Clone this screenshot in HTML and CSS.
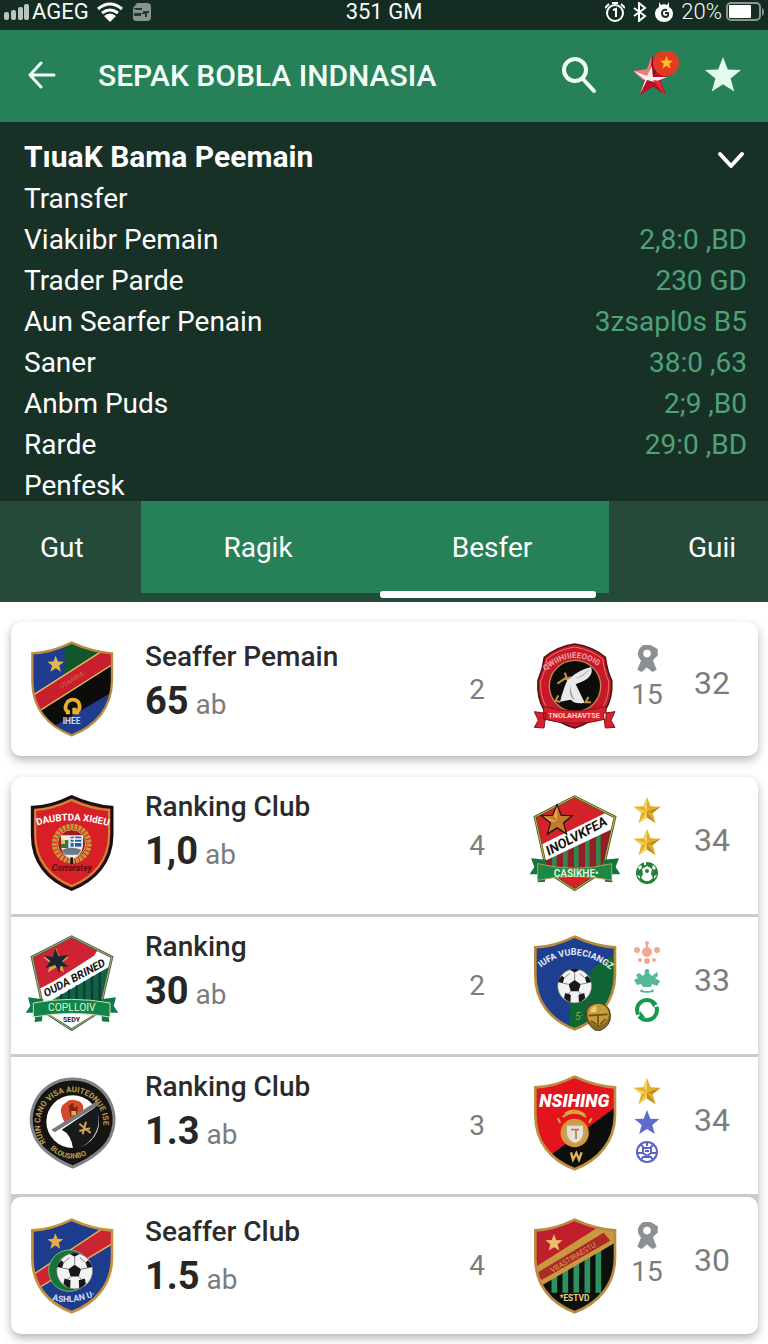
FILE: index.html
```html
<!DOCTYPE html>
<html lang="id">
<head>
    <meta charset="UTF-8">
    <meta name="viewport" content="width=device-width, initial-scale=1.0">
    <title>Sepak Bobla Indnasia</title>
    <link rel="stylesheet" href="styles.css">
</head>
<body>
    <!-- shared shapes -->
    <svg class="defs" width="0" height="0" aria-hidden="true">
        <defs>
            <path id="shape" d="M143 5Q80 36 25 37V120C25 200 70 255 143 283C215 255 263 200 264 120V37Q205 33 143 5Z"/>
            <clipPath id="inside"><use href="#shape"/></clipPath>
            <path id="penta" d="M143 5L24 66L60 230L143 284L226 230L264 66Z"/>
            <clipPath id="insidePenta"><use href="#penta"/></clipPath>
            <symbol id="star" viewBox="0 0 24 24"><path d="M12 0l3.2 8.3 8.8.4-6.900 5.600 2.400 8.700L12 18.200 4.500 23l2.400-8.700L0 8.700l8.800-.4z"/></symbol>
            <symbol id="gold" viewBox="0 0 24 24">
                <path fill="#e3ae2b" d="M12 0l3.200 8.300 8.800.4-6.900 5.600 2.400 8.700L12 18.200 4.500 23l2.400-8.700L0 8.700l8.800-.4z"/>
                <path fill="#f7d257" d="M12 0v13L8.800 8.300zM0 8.700l12 4.300-5.100 1.300zM4.500 23L12 13v5.200z"/>
                <path fill="#c28a18" d="M24 8.700L12 13l5.100 1.300zM19.500 23L12 13v5.200z"/>
            </symbol>
            <symbol id="ball" viewBox="0 0 100 100">
                <circle cx="50" cy="50" r="48" fill="#f3f3f3" stroke="#777" stroke-width="2"/>
                <path fill="#181818" d="M50 33l17 12-6 20H39l-6-20zM36 4l14 8 14-8q-14-5-28 0zM3 39l13 3 5-15-7-6Q4 29 3 39zM97 39l-13 3-5-15 7-6q9 8 11 18zM20 85l3-15 16 5-1 21q-10-3-18-11zM80 85l-3-15-16 5 1 21q10-3 18-11z"/>
                <path fill="none" stroke="#555" stroke-width="2" d="M50 33V12M33 45L16 42M67 45l17-3M39 65l-8 8M61 65l8 8M21 27L36 14M79 27L64 14"/>
            </symbol>
            <symbol id="award" viewBox="0 0 20 26">
                <circle cx="10" cy="8" r="6" fill="none" stroke="#8d9092" stroke-width="5"/>
                <path fill="#8d9092" d="M5 13h10l4 10-4 2-5-4-5 4-4-2zM15 1l5 3v6l-4 3z"/>
            </symbol>
        </defs>
    </svg>

    <div class="status">
        <div class="status-left">
            <svg width="26" height="18" viewBox="0 0 26 18" fill="#b9c4be"><rect y="9" width="5" height="8" rx="2"/><rect x="7" y="7" width="5" height="10" rx="2"/><rect x="14" y="4" width="5" height="13" rx="2"/><rect x="20" y="1" width="5" height="16" rx="2"/></svg>
            <span>AGEG</span>
            <svg class="wifi" width="26" height="20" viewBox="0 0 26 20" fill="none" stroke="#fff" stroke-width="3"><path d="M1 7Q13-3 25 7M5 11q8-6 16 0"/><path fill="#fff" stroke="none" d="M7 14q6-5 12 0l-6 6z"/></svg>
            <svg width="18" height="18" viewBox="0 0 18 18"><path fill="#87938d" d="M4 0h10q4 0 4 4v10q0 4-4 4H3q-3 0-3-3v-3V5z"/><path fill="#26382f" d="M0 5h9v2H3zM1 10h9V8h6v2h-2v4h-2v-3H8v2H1z"/></svg>
        </div>
        <span>351 GM</span>
        <div class="status-right">
            <svg width="20" height="20" viewBox="0 0 20 20" fill="none" stroke="#fff" stroke-width="2"><circle cx="10" cy="11" r="8"/><path d="M0 6l4-4M20 6l-4-4M8 8l3-1v8M7 1h6"/></svg>
            <svg width="14" height="20" viewBox="0 0 14 20" fill="none" stroke="#fff" stroke-width="2"><path d="M1 6l11 8-6 5V1l6 5-11 8"/></svg>
            <svg width="18" height="20" viewBox="0 0 18 20"><path fill="#fff" d="M4 0l2 3 3-1 3 1 2-3v5q4 2 4 7a9 8 0 0 1-18 0q0-5 4-7z"/><path fill="none" stroke="#142c22" stroke-width="2" d="M12 8q-5-1-5 3t4 4q3-1 2-4h-3"/></svg>
            <span class="battery-text">20%</span>
            <svg width="38" height="20" viewBox="0 0 38 20"><rect x="1" y="1" width="33" height="17" rx="4" fill="none" stroke="#8d9892" stroke-width="2"/><rect x="3" y="3" width="22" height="13" rx="1" fill="#fff"/><path fill="#8d9892" d="M36 6q2 1 2 4t-2 4z"/></svg>
        </div>
    </div>

    <header>
        <button class="back" aria-label="Kembali"><svg width="28" height="28" viewBox="0 0 28 28" fill="none" stroke="#f4fff9" stroke-width="3" stroke-linecap="round" stroke-linejoin="round"><path d="M26 14H2M13 2L2 14l11 12"/></svg></button>
        <h1>SEPAK BOBLA INDNASIA</h1>
        <div class="actions">
            <button aria-label="Cari"><svg width="36" height="38" viewBox="0 0 36 38" fill="none" stroke="#f0fff8" stroke-width="4" stroke-linecap="round"><circle cx="14" cy="14" r="11"/><path d="M22 23l11 12"/></svg></button>
            <button class="wide" aria-label="Klub">
                <svg width="60" height="48" viewBox="0 0 60 48">
                    <path fill="#b8122a" d="M31 4l5 14 14 3-10 9 5 14-13-8-13 8 4-15-11-9 14-2z"/>
                    <path fill="#ee7b7c" d="M31 4l-2 20-7 5-10-9 14-2z"/>
                    <path fill="#fbeeee" d="M13 20l13 5 5-10 1 11 14 0-12 5-8-2-7 14 5-14z"/>
                    <path fill="#e0283a" d="M32 29l7 1 5 14z"/>
                    <path fill="#820c1c" d="M31 4l5 14-4 8z"/>
                    <circle cx="45" cy="12" r="13" fill="#e33a26"/>
                    <use href="#star" x="39" y="5" width="13" height="13" fill="#ffc21c"/>
                </svg>
            </button>
            <button aria-label="Favorit"><svg width="36" height="36" viewBox="0 0 24 24" fill="#e2fbee"><use href="#star" width="24" height="24"/></svg></button>
        </div>
    </header>

    <section class="panel">
        <div class="panel-head">
            <h2>TıuaK Bama Peemain</h2>
            <button aria-label="Tutup"><svg width="28" height="18" viewBox="0 0 28 18" fill="none" stroke="#fff" stroke-width="4" stroke-linecap="round" stroke-linejoin="round"><path d="M3 3l11 12L25 3"/></svg></button>
        </div>
        <dl>
            <div><dt>Transfer</dt></div>
            <div><dt>Viakıibr Pemain</dt><dd>2,8:0 ,BD</dd></div>
            <div><dt>Trader Parde</dt><dd>230 GD</dd></div>
            <div><dt>Aun Searfer Penain</dt><dd>3zsapl0s B5</dd></div>
            <div><dt>Saner</dt><dd>38:0 ,63</dd></div>
            <div><dt>Anbm Puds</dt><dd>2;9 ,B0</dd></div>
            <div><dt>Rarde</dt><dd>29:0 ,BD</dd></div>
            <div><dt>Penfesk</dt></div>
        </dl>
    </section>

    <nav>
        <button class="tab first">Gut</button>
        <button class="tab green">Ragik</button>
        <button class="tab green active">Besfer</button>
        <button class="tab last">Guii</button>
    </nav>

    <main>
        <div class="card">
            <article class="row tall">
                <svg class="crest" viewBox="0 0 288 288">
                    <g clip-path="url(#inside)">
                        <path fill="#1f3c8f" d="M0 0h288v288H0z"/>
                        <path fill="#11572b" d="M122 0h100v60l-100 60z"/>
                        <path fill="#0c0d0a" d="M30 210L288 60v80L80 262z"/>
                        <path fill="#c71f2c" stroke="#e6bd62" stroke-width="4" d="M0 180L250 20l40 35L30 220z"/>
                    </g>
                    <use href="#star" x="70" y="44" width="50" height="50" fill="#dcb94f"/>
                    <text transform="rotate(-31 140 122)" x="104" y="126" font-size="20" fill="#d9643e">USAABIA</text>
                    <path fill="none" stroke="#eaae31" stroke-width="11" d="M131 212q-10-8-5-20 5-16 21-16t19 16q4 12-6 20v8"/>
                    <path fill="#eaae31" d="M124 208h14v12h-12zM145 200h13v20h-13z"/>
                    <text x="116" y="248" font-size="25" font-weight="700" fill="#c9d6f4">IHEE</text>
                    <use href="#shape" fill="none" stroke="#bb8b3f" stroke-width="7"/>
                </svg>
                <div class="info"><h3>Seaffer Pemain</h3><p><b>65</b> ab</p></div>
                <span class="count">2</span>
                <svg class="crest" viewBox="0 0 288 288">
                    <path fill="#c9182b" stroke="#531217" stroke-width="5" d="M143 9q55 8 92 40 5 40 19 70 4 50-20 90-40 35-91 52-55-17-91-52-23-40-19-90 15-35 19-70 40-33 91-40z"/>
                    <path fill="none" stroke="#e37a54" stroke-width="3" d="M143 18q50 8 84 36 5 40 18 66 3 45-19 82M143 18q-50 8-84 36-5 40-18 66-3 45 19 82"/>
                    <circle cx="144" cy="135" r="77" fill="#0d0c0b" stroke="#c68d46" stroke-width="4"/>
                    <path fill="#e8e8ea" d="M192 78q10 25-24 43l-22 9q14 28 27 55-28 6-42-9l-32 6q10-38 22-65l-14-3 25-5q24-22 60-31z"/>
                    <path fill="#9b9ca0" d="M192 78q-16 22-48 35 30-5 48-35M130 130q0 30 15 50-22-12-15-50"/>
                    <path fill="none" stroke="#c2943a" stroke-width="6" d="M91 128l28-19-6-14M116 116l16-8M94 163l-8 16 14 4M184 168l-8 16h16"/>
                    <path id="arc1" fill="none" d="M56 90q88-78 176 0"/>
                    <text font-size="24" font-weight="700" fill="#f1a8a3"><textPath href="#arc1">QWIIHIIIEEOOIG</textPath></text>
                    <path fill="#d6202c" stroke="#7d141b" stroke-width="3" d="M22 212l35 5-6 44-29-2 12-21zM264 212l-35 5 6 44 29-2-12-21zM50 196q93 28 187 0v38q-94 26-187 0z"/>
                    <text x="64" y="231" font-size="22" font-weight="700" fill="#ffd0c8">TNOLAHAVTSE</text>
                </svg>
                <div class="badges"><svg width="22" height="28"><use href="#award"/></svg><span>15</span></div>
                <span class="total">32</span>
            </article>
        </div>

        <div class="card">
            <article class="row">
                <svg class="crest" viewBox="0 0 288 288">
                    <use href="#shape" fill="#d91f26" stroke="#17120f" stroke-width="9"/>
                    <path fill="none" stroke="#c88b39" stroke-width="6" d="M143 15Q85 42 34 45V120C34 194 77 246 143 273C210 246 254 194 255 120V45Q200 42 143 15Z"/>
                    <path id="arc2" fill="none" d="M40 92q104-34 230 6"/>
                    <text font-size="29" font-weight="700" fill="#fff"><textPath href="#arc2">DAUBTDA XIdEU</textPath></text>
                    <circle cx="143" cy="146" r="52" fill="none" stroke="#c19a3c" stroke-width="15" stroke-dasharray="9 3"/>
                    <circle cx="143" cy="146" r="42" fill="#a2191d" stroke="#d8b24e" stroke-width="3"/>
                    <path fill="#e9edf0" d="M111 121h66v32q-4 30-34 41-29-12-32-41z"/>
                    <path fill="#1d5ea8" d="M140 125h32v30h-32z"/><path stroke="#fff" stroke-width="4" d="M140 132h32M140 142h32M151 125v30"/>
                    <path fill="#37734d" d="M111 135h22v24h-22z"/><path fill="#f0bd34" d="M111 135h12v12h-12z"/><path fill="#6a7a80" d="M114 165q26-14 58 0l-10 14h-38z"/>
                    <path stroke="#26120a" stroke-width="8" d="M143 187v20"/>
                    <text x="83" y="229" font-size="26" font-weight="700" font-style="italic" fill="#541210">Corroratey</text>
                </svg>
                <div class="info"><h3>Ranking Club</h3><p><b>1,0</b> ab</p></div>
                <span class="count">4</span>
                <svg class="crest" viewBox="0 0 288 288">
                    <g clip-path="url(#insidePenta)">
                        <path fill="#d32229" d="M0 0h288v288H0z"/>
                        <path fill="#951c2a" d="M40 180L264 80v150H40z"/>
                        <path stroke="#2f8a47" stroke-width="14" d="M82 130v100M115 130v100M148 120v110M181 110v120M214 90v140"/>
                        <path fill="#fff" d="M20 160L264 40v58L45 202z"/>
                    </g>
                    <text transform="rotate(-28 150 124)" x="48" y="136" font-size="40" font-weight="700" font-style="italic" fill="#15120f">INOLVKFEA</text>
                    <use href="#penta" fill="none" stroke="#4c5a20" stroke-width="8"/><use href="#penta" fill="none" stroke="#d8b55c" stroke-width="3"/>
                    <use href="#star" x="34" y="24" width="112" height="102" fill="#1e130a"/>
                    <use href="#star" x="46" y="34" width="88" height="82" fill="#c37b2a"/>
                    <path fill="#e2a04a" d="M91 34v44L79 62zM48 63l43 15-18 4z"/>
                    <path fill="#15733c" d="M12 190l46 4-4 66-22 2 2-24H8l14-22zM276 190l-46 4 4 66 22 2-2-24h26l-14-22z"/>
                    <path fill="#1c8846" stroke="#b3a052" stroke-width="3" d="M32 206q112 28 222 0v50q-112-24-222 0z"/>
                    <text x="80" y="245" font-size="30" font-weight="700" fill="#dff5d8">CASIKHE•</text>
                </svg>
                <div class="badges"><svg width="28" height="27"><use href="#gold"/></svg><svg width="28" height="27"><use href="#gold"/></svg>
                    <svg width="24" height="24" viewBox="0 0 24 24"><circle cx="12" cy="12" r="11" fill="#248238"/><path fill="#fff" d="M12 5l5 3-1 5 2 4-4 3h-4l-4-3 2-4-1-5zM3 6l3-2 1 3-3 2zM18 4l3 3-2 2-2-2zM2 14l3 1v3zM22 14l-3 1v3zM9 1h2v3H9z"/><circle cx="12" cy="10" r="2" fill="#248238"/></svg>
                </div>
                <span class="total">34</span>
            </article>

            <article class="row">
                <svg class="crest" viewBox="0 0 288 288">
                    <g clip-path="url(#insidePenta)">
                        <path fill="#fff" d="M0 0h288v288H0z"/>
                        <path fill="#cf2334" d="M0 0h250L210 62 50 165 20 60z"/>
                        <path fill="#0d6546" d="M50 215l214-125v140H50z"/>
                        <path stroke="#15383a" stroke-width="7" d="M112 176v60M135 160v76M158 150v86M181 138v98M204 124v110M227 110v100"/>
                        <path fill="#fff" d="M45 162L264 48v42L50 212z"/>
                    </g>
                    <text transform="rotate(-28 150 124)" x="46" y="140" font-size="33" font-weight="700" font-style="italic" fill="#141414">OUDA BRINED</text>
                    <use href="#penta" fill="none" stroke="#476346" stroke-width="8"/><use href="#penta" fill="none" stroke="#d7d7a0" stroke-width="2"/>
                    <use href="#star" x="56" y="38" width="80" height="78" fill="#dda14c"/>
                    <path fill="#1b2733" d="M94 40l10 24 30-4-20 19 20 18-25-4-3 21-12-24-30 10 15-22-19-16 26 3z"/>
                    <path fill="#0e7a48" d="M12 187l46 6-4 66-22 2 2-28H5l14-20zM276 187l-46 6 4 66 22 2-2-28h29l-14-20z"/>
                    <path fill="#fff" d="M76 238q67-10 134 0l-67 40z"/>
                    <path fill="#108549" stroke="#d3dcb0" stroke-width="3" d="M28 204q115-22 230 0v42q-115-22-230 0z"/>
                    <text x="72" y="229" font-size="31" fill="#dff5d8">COPLLOIV</text>
                    <text x="117" y="261" font-size="21" font-weight="700" fill="#222">SEDY</text>
                </svg>
                <div class="info"><h3>Ranking</h3><p><b>30</b> ab</p></div>
                <span class="count">2</span>
                <svg class="crest" viewBox="0 0 288 288">
                    <g clip-path="url(#inside)">
                        <path fill="#1c3f90" d="M0 0h288v288H0z"/>
                        <path fill="#0f6534" d="M288 50q-90 30-108 80-10 40-52 70v88h160z"/>
                    </g>
                    <use href="#shape" fill="none" stroke="#b98a3a" stroke-width="8"/>
                    <path id="arc3" fill="none" d="M42 98q102-80 214 10"/>
                    <text font-size="27" font-weight="700" fill="#e6ecf8"><textPath href="#arc3">IUFA VUBECIANGZ</textPath></text>
                    <use href="#ball" x="90" y="100" width="106" height="106"/>
                    <text x="143" y="254" font-size="32" font-style="italic" fill="#7fae3d">5·</text>
                    <path fill="#8a6a22" stroke="#4f3a10" stroke-width="3" d="M178 240q-6-32 32-34 40 0 40 34 4 34-38 50-32-16-34-50z"/>
                    <circle cx="213" cy="238" r="32" fill="#c79d3c"/>
                    <path fill="#ead078" d="M190 232q2-18 18-20v20z"/><path fill="none" stroke="#6d5118" stroke-width="5" d="M184 242l58-4M213 242v34M192 258l16 10M236 252l-16 16"/>
                </svg>
                <div class="badges">
                    <svg width="26" height="24" viewBox="0 0 26 24" fill="#f3a890"><circle cx="13" cy="12" r="5"/><circle cx="13" cy="3" r="2"/><circle cx="3" cy="10" r="3"/><circle cx="23" cy="10" r="3"/><circle cx="6" cy="20" r="2"/><circle cx="13" cy="21" r="3"/><circle cx="20" cy="20" r="2"/><path d="M12 3h2v8h-2z"/></svg>
                    <svg width="26" height="24" viewBox="0 0 26 24" fill="#56b898"><path d="M11 4q-1-4 2-4t2 4l3 3 5-4 1 4-3 2 5 3-3 5-5-2-1 3H9l-2-3-4 1-3-5 4-2-2-3 3-2 4 3zM7 20l3 2h6l3-2 1 3-7 1-7-1z"/></svg>
                    <svg width="24" height="24" viewBox="0 0 24 24" fill="none" stroke="#159a4d" stroke-width="4"><circle cx="12" cy="12" r="10"/><path stroke="#fff" stroke-width="2" d="M24 7l-7 2M0 19l7-3"/><path fill="#159a4d" stroke="none" d="M15 4l5 1-1 5zM4 20l1-7 5 6z"/></svg>
                </div>
                <span class="total">33</span>
            </article>

            <article class="row">
                <svg class="crest" viewBox="0 0 288 288">
                    <path fill="#151412" stroke="#818487" stroke-width="9" d="M146 12a122 122 0 0 1 80 216q-35 30-80 48-45-18-80-48A122 122 0 0 1 146 12z"/>
                    <path id="arc4" fill="none" d="M66 202A95 95 0 1 1 220 202"/>
                    <text font-size="24" font-weight="700" fill="#b59f4e"><textPath href="#arc4">RUIN CANO VISA AUITEDNUE ISE</textPath></text>
                    <path id="arc5" fill="none" d="M78 222q68 60 140-4"/>
                    <text font-size="22" font-weight="700" fill="#b59f4e"><textPath href="#arc5">BLOUSINBO</textPath></text>
                    <circle cx="146" cy="140" r="79" fill="#fff"/>
                    <path fill="#17191a" d="M113 164L215 96q22 48-10 94-28 32-58 30-6-43-34-56z"/>
                    <path fill="#d5482b" d="M120 138q-20-42 4-54 14-14 30-8 26 4 24 28l-8 16-44 26z"/><path fill="#7e2415" d="M134 92l12-8 4 14 12-4-4 22-10-4-8 14z"/><path fill="#f4a53d" d="M142 108h14v12h-14z"/>
                    <path fill="#777a7b" d="M82 164L220 78l4 12-132 82z"/>
                    <path stroke="#d8a448" stroke-width="6" d="M166 146l34 28M186 140l-10 38M166 168l32-8"/>
                </svg>
                <div class="info"><h3>Ranking Club</h3><p><b>1.3</b> ab</p></div>
                <span class="count">3</span>
                <svg class="crest" viewBox="0 0 288 288">
                    <g clip-path="url(#inside)">
                        <path fill="#0e0d0d" d="M0 0h288v288H0z"/>
                        <path fill="#e3141b" d="M0 0h288v80L60 248 0 260z"/>
                    </g>
                    <use href="#shape" fill="none" stroke="#bd8f42" stroke-width="8"/>
                    <text x="37" y="97" font-size="54" font-weight="900" font-style="italic" fill="#fff">NSIHING</text>
                    <path fill="none" stroke="#dca541" stroke-width="6" d="M107 126q35-26 70 0M114 116q28-20 60 4M100 144l-8-14M186 144l8-14"/>
                    <circle cx="143" cy="174" r="38" fill="#c4a06a" stroke="#d89a2e" stroke-width="9"/>
                    <path fill="#e9e0d2" d="M120 152h48v26q-4 20-24 26-20-6-24-26z"/><path fill="none" stroke="#a1845a" stroke-width="5" d="M132 164h24M147 164v28"/>
                    <path fill="none" stroke="#e4b65a" stroke-width="7" d="M132 232l6 22 10-20 8 20 8-22"/>
                </svg>
                <div class="badges"><svg width="28" height="27"><use href="#gold"/></svg><svg width="26" height="25" fill="#5b6ccd"><use href="#star"/></svg>
                    <svg width="24" height="24" viewBox="0 0 24 24" fill="none" stroke="#5865c4" stroke-width="2"><circle cx="12" cy="12" r="10"/><path d="M5 4l4 4h6l4-4M8 8v5l4 3 4-3V8M2 13h6M16 13h6M6 20l2-3h8l2 3M10 11h4M12 2v4"/></svg>
                </div>
                <span class="total">34</span>
            </article>

            <article class="row tall">
                <svg class="crest" viewBox="0 0 288 288">
                    <g clip-path="url(#inside)">
                        <path fill="#1d3d8c" d="M0 0h288v288H0z"/>
                        <path fill="#cb2433" stroke="#e4b566" stroke-width="4" d="M0 188L250 22l40 40L30 218z"/>
                    </g>
                    <use href="#shape" fill="none" stroke="#c6923d" stroke-width="8"/>
                    <use href="#star" x="70" y="46" width="48" height="48" fill="#e3ab4b"/>
                    <circle cx="136" cy="158" r="62" fill="#16743a" stroke="#7fb37c" stroke-width="3"/>
                    <use href="#ball" x="96" y="98" width="112" height="122"/>
                    <path id="arc6" fill="none" d="M84 246q60 18 140-16"/>
                    <text font-size="26" font-weight="700" fill="#d0dcf4"><textPath href="#arc6">ASHLAN U·</textPath></text>
                </svg>
                <div class="info"><h3>Seaffer Club</h3><p><b>1.5</b> ab</p></div>
                <span class="count">4</span>
                <svg class="crest" viewBox="0 0 288 288">
                    <g clip-path="url(#inside)">
                        <path fill="#0c110d" d="M0 0h288v288H0z"/>
                        <path stroke="#2e9160" stroke-width="17" d="M82 150v74M115 140v84M148 130v94M181 100v124M214 80v144"/>
                        <path fill="#bf1f2a" d="M0 0h288L20 160z"/>
                        <path fill="#c9983f" d="M20 150L210 30l78-10v40L40 205z"/>
                        <path fill="#a92a26" d="M28 166L230 44l20 24L44 186z"/>
                    </g>
                    <text transform="rotate(-31 140 120)" x="62" y="125" font-size="22" fill="#dfa054">VBASTIRAESTU</text>
                    <use href="#shape" fill="none" stroke="#b98b45" stroke-width="8"/>
                    <use href="#star" x="55" y="48" width="52" height="52" fill="#ecbd66"/>
                    <text x="98" y="250" font-size="25" font-weight="700" fill="#e9cf83">*ESTVD</text>
                </svg>
                <div class="badges"><svg width="22" height="28"><use href="#award"/></svg><span>15</span></div>
                <span class="total">30</span>
            </article>
        </div>
    </main>
</body>
</html>
```
FILE: styles.css
```css
*{
    margin: 0;
    padding: 0;
    box-sizing: border-box;
}
body{
    background-color: #fff;
    color: #2b2b2b;
    font-family: Roboto, "Liberation Sans", sans-serif;
}
button{
    background: none;
    border: 0;
    color: inherit;
    font: inherit;
    cursor: pointer;
}
svg{
    display: block;
    flex: none;
}
.defs{
    position: absolute;
}

/* status bar */
.status{
    display: grid;
    grid-template-columns: 1fr auto 1fr;
    align-items: center;
    height: 30px;
    padding: 0 4px 6px;
    background-color: #142c22;
    color: #f5fbf8;
    font-size: 22px;
    line-height: 24px;
}
.status-left, .status-right{
    display: flex;
    align-items: center;
    gap: 2px;
}
.status-left .wifi{
    margin: 0 8px 0 6px;
}
.status-right{
    justify-content: flex-end;
    gap: 8px;
}
.battery-text{
    margin-right: -4px;
    font-weight: 300;
}

/* top bar */
header{
    display: flex;
    align-items: center;
    min-height: 92px;
    padding: 0 21px 2px 28px;
    background-color: #278158;
    color: #f4fff9;
}
h1{
    margin-left: 42px;
    font-size: 30px;
    font-weight: 500;
}
.actions{
    display: flex;
    gap: 18px;
    margin-left: auto;
}
.actions button{
    display: grid;
    place-items: center;
    width: 48px;
    height: 48px;
}
.actions .wide{
    width: 60px;
}

/* summary panel */
.panel{
    padding: 12px 21px 0 24px;
    background-color: #183127;
    color: #fff;
    font-size: 28px;
}
.panel-head{
    display: flex;
    justify-content: space-between;
    align-items: center;
    height: 44px;
    margin-bottom: 6px;
}
.panel-head button{
    margin: 8px 2px 0 0;
}
h2{
    font-size: 30px;
    font-weight: 700;
}
dl{
    display: grid;
    gap: 11px;
}
dl div{
    display: flex;
    justify-content: space-between;
    line-height: 30px;
}
dd{
    color: #4fa278;
}

/* tabs */
nav{
    display: grid;
    grid-template-columns: 141fr 234fr 234fr 159fr;
    height: 101px;
    padding-bottom: 9px;
    background-color: #264a3a;
}
.tab{
    position: relative;
    color: #fff;
    font-size: 28px;
}
.first{
    padding-left: 40px;
    text-align: left;
}
.last{
    padding-right: 32px;
    text-align: right;
}
.green{
    background-color: #278158;
}
.active::after{
    content: "";
    position: absolute;
    left: 5px;
    right: 13px;
    bottom: -5px;
    height: 7px;
    border-radius: 3px;
    background-color: #fff;
}

/* club list */
main{
    display: grid;
    gap: 21px;
    padding: 20px 10px 10px 11px;
}
.card{
    display: grid;
    gap: 3px;
    border-radius: 10px;
    background-color: #c9cbcd;
    box-shadow: 0 4px 10px rgba(60, 70, 75, 0.4);
}
.row{
    display: grid;
    grid-template-columns: 122px 1fr 90px 106px 38px 92px;
    align-items: center;
    justify-items: center;
    min-height: 137px;
    background-color: #fff;
}
.row:first-child{
    border-radius: 10px 10px 0 0;
}
.row:last-child{
    border-radius: 10px;
}
.row:only-child{
    min-height: 134px;
}
.crest{
    width: 96px;
    height: 96px;
    margin-bottom: 6px;
}
.tall .crest{
    margin-bottom: 0;
}
.info{
    align-self: start;
    justify-self: start;
    padding: 10px 0 0 12px;
}
.tall .info{
    padding-top: 15px;
}
h3{
    font-size: 28px;
    font-weight: 500;
    line-height: 40px;
}
.info p{
    color: #7c7c7c;
    font-size: 28px;
    line-height: 48px;
}
b{
    color: #262626;
    font-size: 38px;
    font-weight: 700;
}
.count, .badges{
    color: #7c7c7c;
    font-size: 28px;
}
.badges{
    display: grid;
    gap: 5px;
    justify-items: center;
    margin-bottom: 10px;
}
.tall .badges{
    margin-bottom: 22px;
}
.total{
    margin-bottom: 12px;
    color: #7c7c7c;
    font-size: 32px;
}
```
